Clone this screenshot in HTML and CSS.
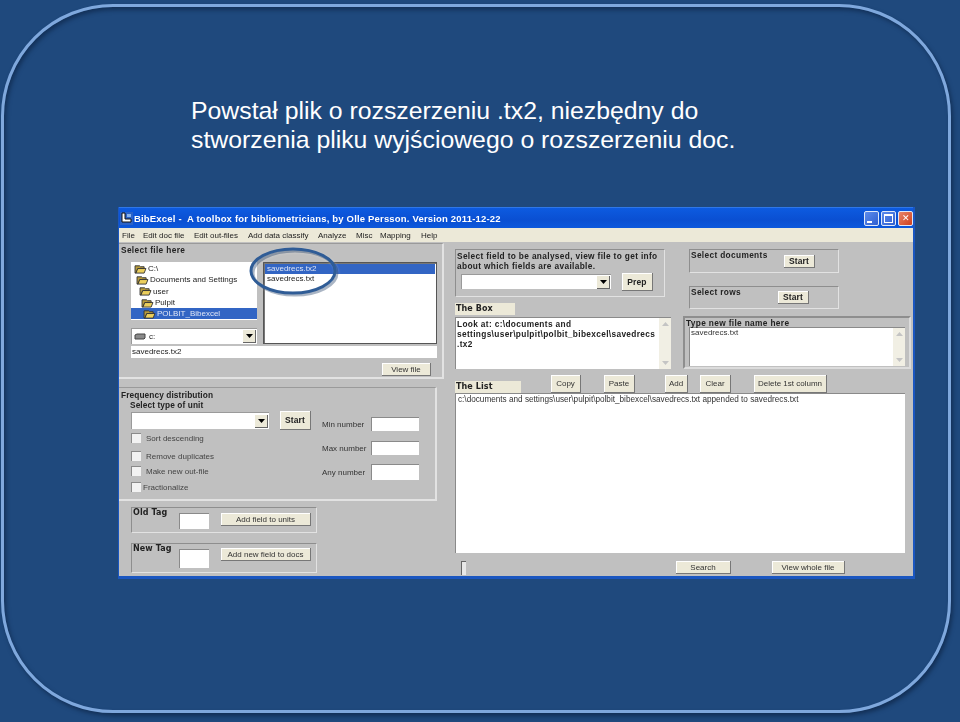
FILE: index.html
```html
<!DOCTYPE html>
<html lang="pl">
<head>
    <meta charset="UTF-8">
    <meta name="viewport" content="width=device-width, initial-scale=1.0">
    <title>Powstał plik</title>
    <link rel="stylesheet" href="styles.css">
</head>
<body>
    <svg class="defs" width="0" height="0">
        <symbol id="folder" viewBox="0 0 14 11">
            <path d="M1 2h5l1 1h4v2H4L2 10H1z" fill="#b89c3c" stroke="#333" stroke-width="1"/>
            <path d="M4 5h9l-2 5H2z" fill="#eccf5c" stroke="#333" stroke-width="1"/>
        </symbol>
        <symbol id="arrow" viewBox="0 0 7 4">
            <path d="M0 0h7L3.5 4z"/>
        </symbol>
    </svg>

    <div class="frame">
        <h1 class="heading">Powstał plik o rozszerzeniu .tx2, niezbędny do<br>stworzenia pliku wyjściowego o rozszerzeniu doc.</h1>

        <div class="app-window">
            <div class="titlebar">
                <svg class="app-icon" width="13" height="13" viewBox="0 0 13 13">
                    <rect x="0" y="0" width="13" height="13" fill="#2a62c8"/>
                    <path d="M2 1v9h9V7H5V1z" fill="#fff" stroke="#111" stroke-width="1"/>
                    <path d="M7 2h4v3H7z" fill="#8ab4ec"/>
                </svg>
                <span class="title-text">BibExcel -&nbsp; A toolbox for bibliometricians, by Olle Persson. Version 2011-12-22</span>
                <div class="window-buttons">
                    <span class="win-btn"><span class="min-glyph"></span></span>
                    <span class="win-btn"><span class="max-glyph"></span></span>
                    <span class="win-btn win-close">✕</span>
                </div>
            </div>
            <div class="menubar">
                <span class="menu-file">File</span>
                <span class="menu-doc">Edit doc file</span>
                <span class="menu-out">Edit out-files</span>
                <span class="menu-add">Add data classify</span>
                <span class="menu-analyze">Analyze</span>
                <span class="menu-misc">Misc</span>
                <span class="menu-map">Mapping</span>
                <span>Help</span>
            </div>

            <div class="form">
                <div class="left-col">
                    <section class="panel file-panel">
                        <div class="bold file-title">Select file here</div>
                        <div class="file-browse">
                            <div class="browse-left">
                                <div class="tree">
                                    <div class="tree-row indent-0"><svg class="folder"><use href="#folder"/></svg>C:\</div>
                                    <div class="tree-row indent-1"><svg class="folder"><use href="#folder"/></svg>Documents and Settings</div>
                                    <div class="tree-row indent-2"><svg class="folder"><use href="#folder"/></svg>user</div>
                                    <div class="tree-row indent-3"><svg class="folder"><use href="#folder"/></svg>Pulpit</div>
                                    <div class="tree-row indent-4 selected"><svg class="folder"><use href="#folder"/></svg>POLBIT_Bibexcel</div>
                                </div>
                                <div class="combo drive-combo">
                                    <svg class="drive" width="12" height="7" viewBox="0 0 12 7"><path d="M1 2l2-1h8v4l-1 1H1z" fill="#8a8a8a" stroke="#444"/></svg>
                                    <span>c:</span>
                                    <span class="combo-btn"><svg width="7" height="4"><use href="#arrow"/></svg></span>
                                </div>
                            </div>
                            <div class="file-list">
                                <div class="file-row selected">savedrecs.tx2</div>
                                <div class="file-row">savedrecs.txt</div>
                            </div>
                        </div>
                        <div class="filename">savedrecs.tx2</div>
                        <div class="file-actions"><button class="btn view-file">View file</button></div>
                    </section>

                    <section class="panel freq-panel">
                        <div class="bold freq-title">Frequency distribution</div>
                        <div class="bold unit-title">Select type of unit</div>
                        <div class="freq-body">
                            <div class="freq-options">
                                <div class="unit-row">
                                    <div class="combo unit-combo"><span class="combo-btn"><svg width="7" height="4"><use href="#arrow"/></svg></span></div>
                                    <button class="btn bold start-btn">Start</button>
                                </div>
                                <label class="check check-sort"><span class="box"></span>Sort descending</label>
                                <label class="check check-dup"><span class="box"></span>Remove duplicates</label>
                                <label class="check check-new"><span class="box"></span>Make new out-file</label>
                                <label class="check check-frac"><span class="box"></span>Fractionalize</label>
                            </div>
                            <div class="numbers">
                                <div class="number-row"><span>Min number</span><span class="field num-min"></span></div>
                                <div class="number-row"><span>Max number</span><span class="field num-max"></span></div>
                                <div class="number-row"><span>Any number</span><span class="field num-any"></span></div>
                            </div>
                        </div>
                    </section>

                    <section class="tag-panel old-tag">
                        <span class="bold tag-label">Old Tag</span>
                        <span class="field tag-field"></span>
                        <button class="btn tag-btn">Add field to units</button>
                    </section>
                    <section class="tag-panel new-tag">
                        <span class="bold tag-label">New Tag</span>
                        <span class="field tag-field"></span>
                        <button class="btn tag-btn">Add new field to docs</button>
                    </section>
                </div>

                <div class="right-col">
                    <div class="right-top">
                        <div class="box-col">
                            <section class="tag-panel field-panel">
                                <div class="bold wide field-info">Select field to be analysed, view file to get info<br>about which fields are available.</div>
                                <div class="field-row">
                                    <div class="combo field-combo"><span class="combo-btn"><svg width="7" height="4"><use href="#arrow"/></svg></span></div>
                                    <button class="btn bold prep-btn">Prep</button>
                                </div>
                            </section>
                            <div class="bold tab-label box-label">The Box</div>
                            <div class="textbox the-box">
                                <div class="bold wide box-text">Look at: c:\documents and<br>settings\user\pulpit\polbit_bibexcel\savedrecs<br>.tx2</div>
                                <div class="scrollbar">
                                    <svg width="7" height="4" class="up"><use href="#arrow"/></svg>
                                    <svg width="7" height="4"><use href="#arrow"/></svg>
                                </div>
                            </div>
                        </div>
                        <div class="select-col">
                            <section class="tag-panel select-panel docs-panel">
                                <span class="bold wide">Select documents</span>
                                <button class="btn bold docs-start">Start</button>
                            </section>
                            <section class="tag-panel select-panel rows-panel">
                                <span class="bold wide">Select rows</span>
                                <button class="btn bold rows-start">Start</button>
                            </section>
                            <section class="tag-panel type-panel">
                                <div class="bold wide type-title">Type new file name here</div>
                                <div class="textbox type-box">
                                    <div class="type-text">savedrecs.txt</div>
                                    <div class="scrollbar">
                                        <svg width="7" height="4" class="up"><use href="#arrow"/></svg>
                                        <svg width="7" height="4"><use href="#arrow"/></svg>
                                    </div>
                                </div>
                            </section>
                        </div>
                    </div>

                    <div class="list-toolbar">
                        <div class="bold tab-label list-label">The List</div>
                        <button class="btn copy-btn">Copy</button>
                        <button class="btn paste-btn">Paste</button>
                        <button class="btn add-btn">Add</button>
                        <button class="btn clear-btn">Clear</button>
                        <button class="btn delete-btn">Delete 1st column</button>
                    </div>
                    <div class="the-list">c:\documents and settings\user\pulpit\polbit_bibexcel\savedrecs.txt appended to savedrecs.txt</div>
                    <div class="list-footer">
                        <span class="tick"></span>
                        <button class="btn search-btn">Search</button>
                        <button class="btn whole-btn">View whole file</button>
                    </div>
                </div>
            </div>

            <!-- hand drawn circle over the file list -->
            <svg class="callout" width="94" height="54" viewBox="0 0 94 54">
                <ellipse cx="46" cy="26" rx="42" ry="22" fill="none" stroke="#0c2a55" stroke-opacity=".35" stroke-width="3" transform="translate(2 2)"/>
                <ellipse cx="46" cy="26" rx="42" ry="22" fill="none" stroke="#2f5c96" stroke-width="3"/>
            </svg>
        </div>
    </div>
</body>
</html>
```

FILE: styles.css
```css
* {
    box-sizing: border-box;
}

body {
    margin: 0;
    height: 722px;
    overflow: hidden;
    background-color: #1f497d;
    font-family: "Liberation Sans", Arial, sans-serif;
}

.defs {
    display: block;
    height: 0;
}

.frame {
    width: 950px;
    height: 709px;
    margin: 4px 0 0 1px;
    border: 3px solid #7fa8dd;
    border-radius: 112px;
    box-shadow: 2px 3px 4px rgba(10, 30, 60, 0.6), inset 2px 3px 4px rgba(10, 30, 60, 0.55);
    padding: 89px 0 0 114px;
}

.heading {
    margin: 0 0 53px 73px;
    color: #fff;
    font-size: 24.8px;
    font-weight: normal;
    line-height: 29px;
    white-space: nowrap;
    height: 58px;
}

/* the screenshot of the program */
.app-window {
    position: relative;
    width: 797px;
    height: 372px;
    background-color: #c0c0c0;
    border-left: 1px solid #1a56c0;
    border-right: 2px solid #1a56c0;
    border-bottom: 3px solid #1a56c0;
    color: #222;
    font-size: 8px;
    filter: blur(0.3px);
}

.bold {
    font-size: 8.3px;
    font-weight: bold;
    letter-spacing: 0.1px;
    color: #222;
}

.bold.wide {
    letter-spacing: 0.35px;
}

.titlebar {
    display: flex;
    align-items: center;
    height: 21px;
    padding: 0 0 0 1px;
    background: linear-gradient(#0d5be0, #0a4fd2 60%, #0c58dc);
    color: #fff;
    border-top: 1px solid #2f77e8;
}

.app-icon {
    flex: none;
}

.title-text {
    margin-left: 1px;
    font-size: 9.5px;
    font-weight: bold;
    letter-spacing: 0.18px;
    white-space: nowrap;
}

.window-buttons {
    display: flex;
    gap: 2px;
    margin-left: auto;
    margin-right: 0;
}

.win-btn {
    display: flex;
    align-items: center;
    justify-content: center;
    width: 15px;
    height: 15px;
    border: 1px solid #dfe8f8;
    border-radius: 2px;
    background: linear-gradient(135deg, #5d8cec, #2f5fd0);
    color: #fff;
    font-size: 9px;
}

.win-close {
    background: linear-gradient(135deg, #e8866a, #cf3f1c);
}

.min-glyph {
    width: 5px;
    height: 2px;
    margin: 7px 5px 0 0;
    background-color: #fff;
}

.max-glyph {
    width: 9px;
    height: 9px;
    border: 1px solid #fff;
    border-top-width: 2px;
}

.menubar {
    display: flex;
    align-items: center;
    height: 14px;
    padding-left: 3px;
    background-color: #ece9d8;
    white-space: nowrap;
}

.menu-file { width: 21px; }
.menu-doc { width: 51px; }
.menu-out { width: 54px; }
.menu-add { width: 70px; }
.menu-analyze { width: 38px; }
.menu-misc { width: 24px; }
.menu-map { width: 41px; }

.form {
    display: flex;
    height: 334px;
}

.left-col {
    flex: none;
    width: 325px;
    padding-top: 1px;
}

.panel {
    border-style: solid;
    border-width: 1px 2px 2px 0;
    border-color: #9a9a9a #e2e2e2 #e2e2e2 #9a9a9a;
}

/* select file */
.file-panel {
    height: 136px;
    padding: 1px 0 0 2px;
}

.file-title {
    line-height: 10px;
    letter-spacing: 0.35px;
}

.file-browse {
    display: flex;
    gap: 6px;
    margin: 7px 0 0 10px;
}

.browse-left {
    width: 126px;
}

.tree {
    height: 58px;
    padding-top: 1px;
    background-color: #fff;
}

.tree-row {
    display: flex;
    align-items: center;
    height: 11.3px;
    white-space: nowrap;
}

.tree-row.selected,
.file-row.selected {
    background-color: #3265c4;
    color: #dfe6f6;
}

.folder {
    width: 13px;
    height: 10px;
    margin-right: 1px;
}

.indent-0 { padding-left: 3px; }
.indent-1 { padding-left: 5px; }
.indent-2 { padding-left: 8px; }
.indent-3 { padding-left: 10px; }
.indent-4 { padding-left: 12px; }

.combo {
    position: relative;
    display: flex;
    align-items: center;
    gap: 3px;
    background-color: #fff;
    border-top: 1px solid #9a9a9a;
    border-left: 1px solid #9a9a9a;
}

.combo-btn {
    display: flex;
    align-items: center;
    justify-content: center;
    width: 13px;
    height: 13px;
    margin-left: auto;
    margin-right: 1px;
    background-color: #ece9d8;
    border-right: 1px solid #666;
    border-bottom: 1px solid #666;
}

.drive-combo {
    height: 16px;
    margin-top: 8px;
    padding-left: 2px;
}

.file-list {
    width: 174px;
    height: 82px;
    padding: 1px;
    background-color: #fff;
    border: 1px solid #555;
    box-shadow: inset 1px 1px 0 #777;
}

.file-row {
    height: 10px;
    padding-left: 2px;
    line-height: 10px;
}

.filename {
    width: 306px;
    height: 12px;
    margin: 2px 0 0 10px;
    padding-left: 1px;
    background-color: #fff;
    line-height: 12px;
}

.file-actions {
    margin: 5px 0 0 261px;
}

.btn {
    display: block;
    padding: 0;
    background-color: #ece9d8;
    border: none;
    border-right: 1px solid #777;
    border-bottom: 1px solid #777;
    box-shadow: inset 1px 1px 0 #fff;
    color: #333;
    font-family: "Liberation Sans", Arial, sans-serif;
    font-size: 8px;
    white-space: nowrap;
}

.btn.bold {
    font-size: 8.5px;
    color: #222;
}

.view-file {
    width: 49px;
    height: 13px;
}

/* frequency */
.freq-panel {
    width: 318px;
    height: 114px;
    margin-top: 8px;
    padding: 2px 0 0 2px;
}

.freq-title {
    line-height: 10px;
}

.unit-title {
    margin-left: 9px;
    line-height: 10px;
}

.freq-body {
    display: flex;
}

.freq-options {
    width: 201px;
    padding-left: 10px;
}

.unit-row {
    display: flex;
    align-items: flex-start;
    gap: 11px;
    margin-top: 1px;
}

.unit-combo {
    width: 138px;
    height: 17px;
    margin-top: 1px;
}

.start-btn {
    width: 31px;
    height: 19px;
}

.check {
    display: flex;
    align-items: center;
    color: #444;
    white-space: nowrap;
}

.box {
    width: 10px;
    height: 10px;
    margin-right: 5px;
    background-color: #f2f2f2;
    border-top: 1px solid #8a8a8a;
    border-left: 1px solid #8a8a8a;
}

.check-sort { margin-top: 3px; }
.check-dup { margin-top: 8px; }
.check-new { margin-top: 5px; }
.check-frac { margin-top: 6px; }
.check-frac .box { margin-right: 2px; }

.numbers {
    padding-top: 2px;
}

.number-row {
    display: flex;
    align-items: center;
    justify-content: space-between;
    width: 97px;
    height: 24px;
    color: #333;
}

.field {
    display: block;
    background-color: #fff;
    border-top: 1px solid #8a8a8a;
    border-left: 1px solid #8a8a8a;
}

.num-min,
.num-max {
    width: 48px;
    height: 14px;
}

.num-any {
    width: 48px;
    height: 16px;
}

/* tag boxes */
.tag-panel {
    border-style: solid;
    border-width: 1px;
    border-color: #8e8e8e #e2e2e2 #e2e2e2 #8e8e8e;
}

.old-tag,
.new-tag {
    display: flex;
    align-items: flex-start;
    width: 186px;
    height: 26px;
    margin: 6px 0 0 12px;
}

.new-tag {
    height: 30px;
    margin-top: 10px;
}

.tag-label {
    width: 47px;
    padding-left: 1px;
    font-family: "DejaVu Sans", Verdana, sans-serif;
    font-size: 8px;
}

.tag-field {
    width: 30px;
    height: 16px;
    margin-top: 5px;
}

.new-tag .tag-field {
    height: 19px;
}

.tag-btn {
    width: 90px;
    height: 13px;
    margin: 5px 0 0 12px;
}

.new-tag .tag-btn {
    margin-top: 4px;
}

/* right side */
.right-col {
    flex: none;
    width: 469px;
    padding: 7px 0 0 11px;
}

.right-top {
    display: flex;
}

.box-col {
    width: 216px;
}

.field-panel {
    width: 210px;
    height: 48px;
    padding: 1px 0 0 1px;
}

.field-info {
    line-height: 10px;
    white-space: nowrap;
}

.field-row {
    display: flex;
    gap: 11px;
    margin: 2px 0 0 4px;
}

.field-combo {
    width: 150px;
    height: 15px;
    margin-top: 1px;
}

.prep-btn {
    width: 31px;
    height: 18px;
}

.tab-label {
    background-color: #ece9d8;
    line-height: 12px;
    height: 12px;
    padding-left: 1px;
    font-family: "DejaVu Sans", Verdana, sans-serif;
    font-size: 8px;
}

.box-label {
    width: 60px;
    margin-top: 6px;
}

.textbox {
    display: flex;
    background-color: #fff;
    border-left: 1px solid #8a8a8a;
    border-top: 1px solid #8a8a8a;
}

.the-box {
    width: 216px;
    height: 52px;
    margin-top: 2px;
}

.box-text {
    flex: 1;
    padding: 1px 0 0 1px;
    line-height: 10px;
    white-space: nowrap;
}

.scrollbar {
    display: flex;
    flex: none;
    flex-direction: column;
    align-items: center;
    justify-content: space-between;
    width: 12px;
    padding: 4px 0;
    background-color: #f1efe4;
    fill: #c4c4c4;
}

.scrollbar .up {
    transform: rotate(180deg);
}

.select-col {
    padding-left: 12px;
    width: 241px;
}

.select-panel {
    display: flex;
    align-items: flex-start;
    width: 150px;
    margin-left: 6px;
    line-height: 10px;
    padding-left: 1px;
}

.docs-panel {
    height: 24px;
}

.rows-panel {
    height: 23px;
    margin-top: 13px;
}

.docs-start,
.rows-start {
    width: 31px;
    height: 13px;
    margin-left: auto;
}

.docs-start {
    margin-top: 5px;
    margin-right: 23px;
}

.rows-start {
    margin-top: 4px;
    margin-right: 29px;
}

.type-panel {
    width: 228px;
    height: 53px;
    margin-top: 7px;
    padding: 0 0 0 4px;
    border-width: 2px;
    border-color: #8e8e8e #dcdcdc #dcdcdc #8e8e8e;
}

.type-title {
    margin-left: -3px;
    height: 9px;
    line-height: 10px;
}

.type-box {
    width: 216px;
    height: 39px;
    margin-top: 0;
}

.type-text {
    flex: 1;
    padding-left: 1px;
    color: #333;
}

/* the list */
.list-toolbar {
    display: flex;
    align-items: flex-end;
    height: 24px;
}

.list-label {
    width: 66px;
}

.list-toolbar .btn {
    height: 18px;
}

.copy-btn { width: 30px; margin-left: 30px; }
.paste-btn { width: 31px; margin-left: 23px; }
.add-btn { width: 23px; margin-left: 30px; }
.clear-btn { width: 31px; margin-left: 12px; }
.delete-btn { width: 73px; margin-left: 23px; }

.the-list {
    width: 450px;
    height: 160px;
    padding-left: 2px;
    background-color: #fff;
    border-top: 1px solid #8a8a8a;
    border-left: 1px solid #8a8a8a;
    font-size: 8.2px;
    line-height: 12px;
    color: #333;
    white-space: nowrap;
}

.list-footer {
    display: flex;
    align-items: flex-start;
    margin-top: 8px;
}

.tick {
    width: 5px;
    height: 14px;
    margin-left: 6px;
    background-color: #e8e8e8;
    border-left: 1px solid #666;
    border-top: 1px solid #666;
}

.search-btn {
    width: 55px;
    height: 13px;
    margin-left: 210px;
}

.whole-btn {
    width: 73px;
    height: 13px;
    margin-left: 41px;
}

.callout {
    position: absolute;
    left: 128px;
    top: 38px;
    filter: drop-shadow(1px 1px 1px rgba(255, 255, 255, 0.3));
}
```
